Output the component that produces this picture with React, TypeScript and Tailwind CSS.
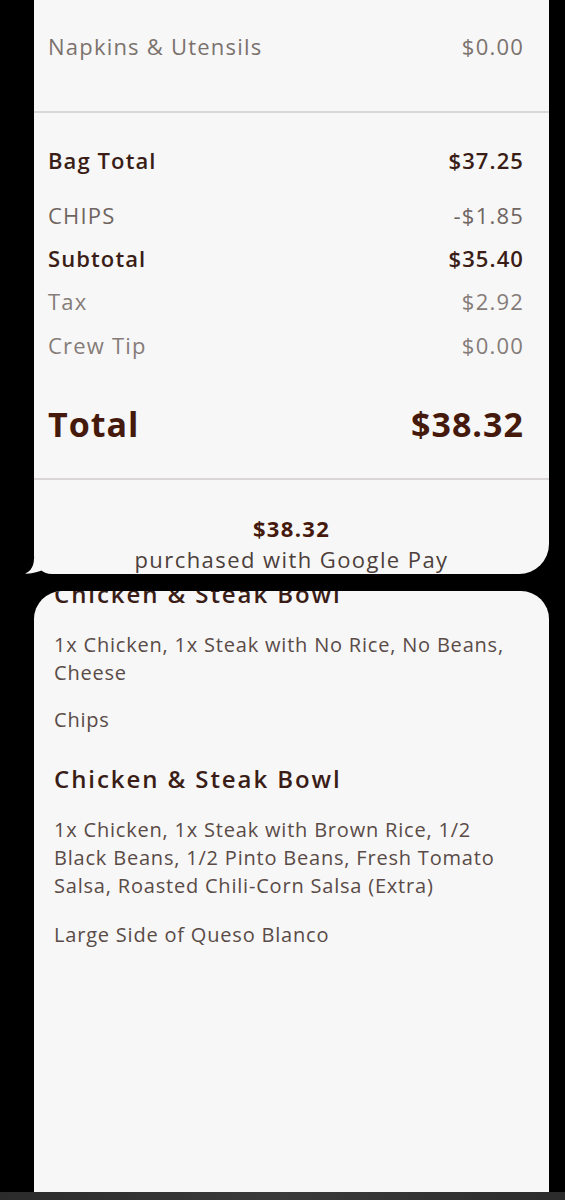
import React from 'react';

const font = { fontFamily: '"Open Sans", "Noto Sans", sans-serif' };

function Row({ label, value, className = '' }: { label: string; value: string; className?: string }) {
    return (
        <div className={`flex items-center justify-between whitespace-nowrap ${className}`}>
            <span>{label}</span>
            <span>{value}</span>
        </div>
    );
}

function BubbleTail() {
    // little speech-bubble tail at bottom left of the receipt card
    return (
        <svg className="absolute left-[-10px] bottom-0" width="36" height="16" viewBox="0 0 36 16">
            <path d="M10 0 C10 8 7 13 1 15.6 C8 16 15 14 20 11 C24 14 28 16 36 16 L36 0 Z" fill="#f7f7f7" />
        </svg>
    );
}

export default function App() {
    return (
        <div className="w-[565px] h-[1200px] bg-black flex flex-col overflow-hidden" style={font}>
            {/* Receipt totals card */}
            <div className="pl-[34px] pr-[16px]">
                <div className="relative bg-[#f7f7f7] rounded-br-[30px] rounded-bl-[18px] h-[574px]">
                    <div className="pl-[14px] pr-[25px] pt-[32px]">
                        <Row label="Napkins & Utensils" value="$0.00" className="h-[28px] text-[22px] tracking-[0.055em] text-[#7b726e]" />
                    </div>
                    <div className="mt-[51px] h-[2px] bg-[#d9d6d5]" />
                    <div className="pl-[14px] pr-[25px]">
                        <Row label="Bag Total" value="$37.25" className="mt-[33px] h-[28px] text-[22px] tracking-[0.05em] font-semibold text-[#3a1d16]" />
                        <Row label="CHIPS" value="-$1.85" className="mt-[27px] h-[28px] text-[22px] tracking-[0.055em] font-medium text-[#6f6561]" />
                        <Row label="Subtotal" value="$35.40" className="mt-[15px] h-[28px] text-[22px] tracking-[0.05em] font-semibold text-[#3a1d16]" />
                        <Row label="Tax" value="$2.92" className="mt-[15px] h-[28px] text-[22px] tracking-[0.055em] text-[#857c79]" />
                        <Row label="Crew Tip" value="$0.00" className="mt-[16px] h-[28px] text-[22px] tracking-[0.055em] text-[#857c79]" />
                        <Row label="Total" value="$38.32" className="mt-[45px] h-[40px] text-[34px] tracking-[0.03em] font-bold text-[#451a0c]" />
                    </div>
                    <div className="mt-[34px] h-[2px] bg-[#d9d6d5]" />
                    <div className="mt-[36px] h-[24px] flex items-center justify-center text-[22px] tracking-[0.06em] font-bold text-[#451a0c]">$38.32</div>
                    <div className="mt-[5px] h-[28px] flex items-center justify-center text-[22px] tracking-[0.065em] text-[#4d3f3b] whitespace-nowrap">purchased with Google Pay</div>
                    <BubbleTail />
                </div>
            </div>

            {/* Order items card */}
            <div className="mt-[17px] pl-[34px] pr-[16px]">
                <div className="bg-[#f7f7f7] rounded-t-[28px] h-[601px] overflow-hidden pl-[20px] pr-[29px]">
                    <div className="mt-[-11px] h-[28px] text-[24px] tracking-[0.08em] font-semibold text-[#3a1d16] leading-[28px] whitespace-nowrap">Chicken &amp; Steak Bowl</div>
                    <p className="mt-[23px] text-[20px] tracking-[0.04em] leading-[28px] text-[#5a4b47]">1x Chicken, 1x Steak with No Rice, No Beans, Cheese</p>
                    <p className="mt-[19px] text-[20px] tracking-[0.04em] leading-[28px] text-[#5a4b47]">Chips</p>
                    <div className="mt-[31px] h-[28px] text-[24px] tracking-[0.08em] font-semibold text-[#3a1d16] leading-[28px] whitespace-nowrap">Chicken &amp; Steak Bowl</div>
                    <p className="mt-[23px] text-[20px] tracking-[0.04em] leading-[28px] text-[#5a4b47]">1x Chicken, 1x Steak with Brown Rice, 1/2 Black Beans, 1/2 Pinto Beans, Fresh Tomato Salsa, Roasted Chili-Corn Salsa (Extra)</p>
                    <p className="mt-[21px] text-[20px] tracking-[0.04em] leading-[28px] text-[#5a4b47]">Large Side of Queso Blanco</p>
                </div>
            </div>

            {/* bottom bar */}
            <div className="h-[8px] bg-gradient-to-r from-[#2b2b2b] via-[#3a3a3a] to-[#2b2b2b]" />
        </div>
    );
}
